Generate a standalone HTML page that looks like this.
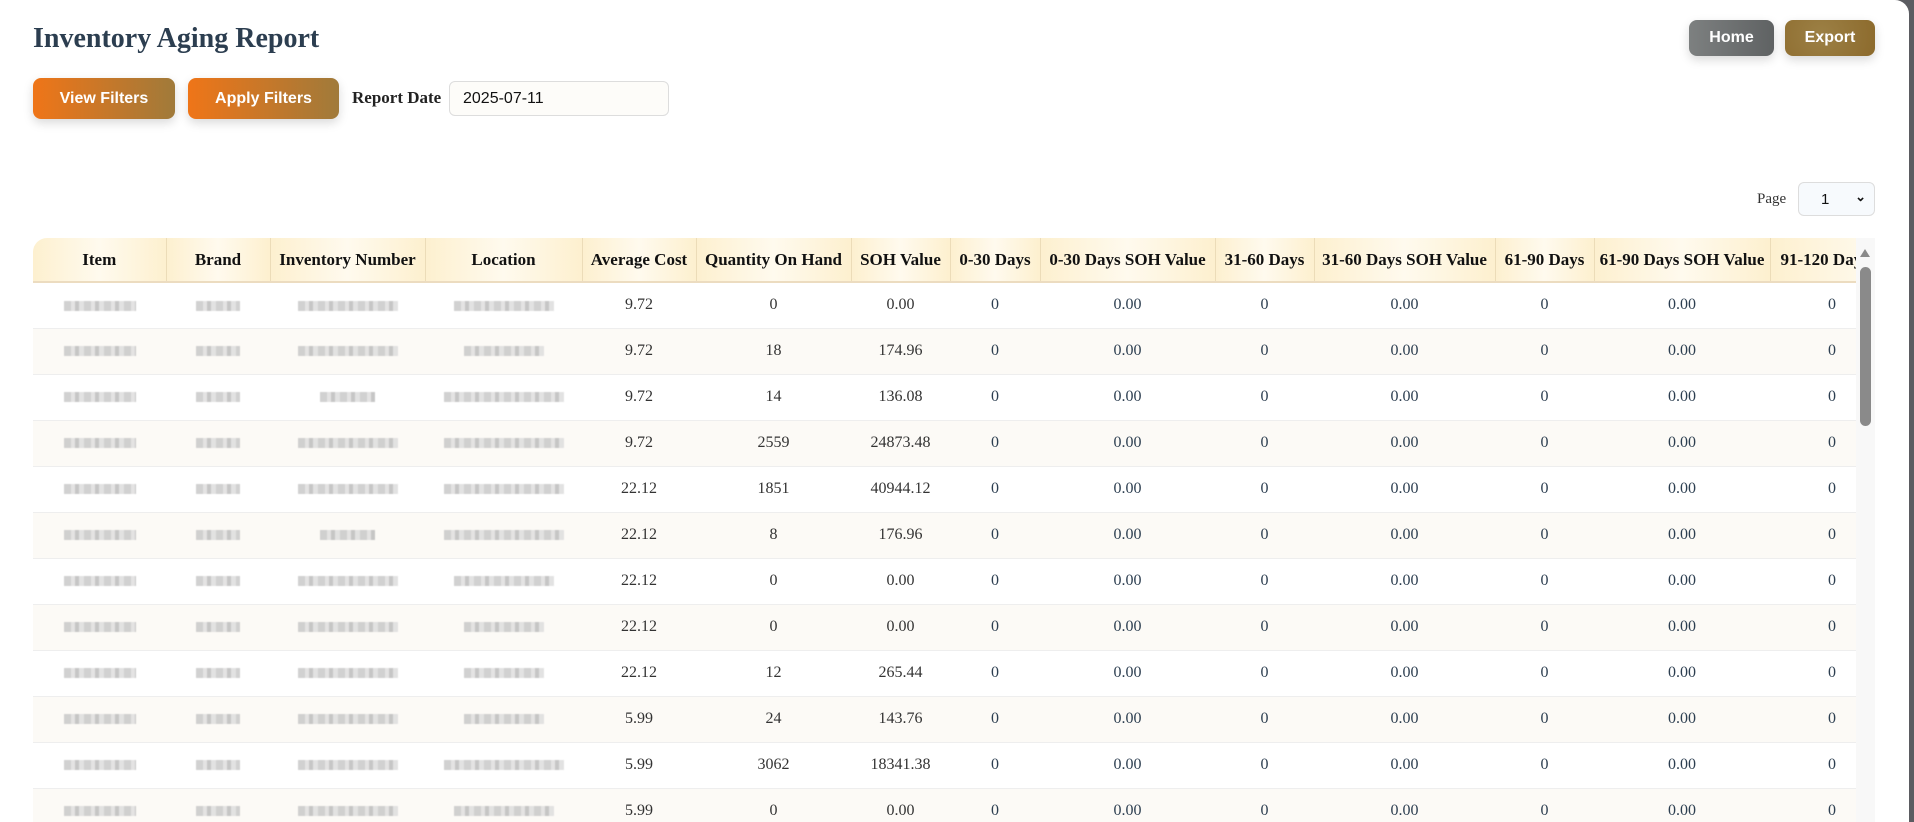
<!DOCTYPE html>
<html><head><meta charset="utf-8"><style>
*{box-sizing:border-box;margin:0;padding:0}
html,body{width:1914px;height:822px;overflow:hidden;background:#5b5c61}
.panel{position:absolute;left:0;top:0;width:1909px;height:822px;background:#fff;border-top-right-radius:14px;overflow:hidden}
h1{position:absolute;left:33px;top:23px;font:bold 28px "Liberation Serif",serif;color:#2c3e50;letter-spacing:0}
.btn{position:absolute;color:#fff;font:bold 16px "Liberation Sans",sans-serif;display:flex;align-items:center;justify-content:center;border-radius:8px;box-shadow:0 4px 10px rgba(0,0,0,.15)}
.of{background:linear-gradient(90deg,#ef7518,#a07a3a)}
.lbl{position:absolute;left:352px;top:88px;font:bold 17px "Liberation Serif",serif;color:#222}
.inp{position:absolute;left:449px;top:81px;width:220px;height:35px;border:1px solid #ddd;border-radius:6px;background:#fdfcf9;font:16px "Liberation Sans",sans-serif;color:#111;padding:8px 0 0 13px}
.pg{position:absolute;left:1757px;top:191px;font:15px "Liberation Serif",serif;color:#333}
.sel{position:absolute;left:1798px;top:182px;width:77px;height:34px;border:1px solid #ddd;border-radius:6px;background:#f7fafd;font:15px "Liberation Sans",sans-serif;padding:8px 0 0 22px;color:#111}
.tw{position:absolute;left:33px;top:238px;width:1823px;height:600px;overflow:hidden}
table{border-collapse:collapse;table-layout:fixed;width:1950px}
th{height:44px;font:bold 17px "Liberation Serif",serif;color:#111;background:linear-gradient(90deg,#fdf0cf,#fffaee 50%,#fdf0cf);border-right:1px solid #ecdcb8;border-bottom:2px solid #ecdcc0;white-space:nowrap;overflow:hidden}
th:first-child{border-top-left-radius:14px}
td{height:46px;text-align:center;font:16px "Liberation Serif",serif;color:#333;border-bottom:1px solid #eee}
tr:nth-child(even) td{background:#fcfaf6}
td.b{color:#2c3e50}
.bl{display:inline-block;height:10px;vertical-align:middle;background:repeating-linear-gradient(90deg,#c9c9c9 0 7px,#e0dfdf 7px 11px,#bdbdbd 11px 15px,#dedede 15px 20px);filter:blur(.6px);opacity:.85}
.sb{position:absolute;left:1856px;top:238px;width:19px;height:600px;background:#f8f8f8}
.th{position:absolute;left:4px;top:29px;width:11px;height:159px;background:#8a8a8a;border-radius:6px}
.ar{position:absolute;left:4px;top:11px;width:0;height:0;border-left:5.5px solid transparent;border-right:5.5px solid transparent;border-bottom:8px solid #8a8a8a}
</style></head><body>
<div class="panel">
<h1>Inventory Aging Report</h1>
<div class="btn of" style="left:33px;top:78px;width:142px;height:41px">View Filters</div>
<div class="btn of" style="left:188px;top:78px;width:151px;height:41px">Apply Filters</div>
<div class="lbl">Report Date</div>
<div class="inp">2025-07-11</div>
<div class="btn" style="left:1689px;top:20px;width:85px;height:36px;background:linear-gradient(90deg,#7d8080,#5f6263)">Home</div>
<div class="btn" style="left:1785px;top:20px;width:90px;height:36px;background:radial-gradient(circle at 40% 40%,#9c8045,#8c6a2c)">Export</div>
<div class="pg">Page</div>
<div class="sel">1<span style="position:absolute;right:8px;top:6px;font-size:13px;font-weight:bold">&#8964;</span></div>
<div class="tw"><table>
<colgroup><col style="width:133px"><col style="width:104px"><col style="width:155px"><col style="width:157px"><col style="width:114px"><col style="width:155px"><col style="width:99px"><col style="width:90px"><col style="width:175px"><col style="width:99px"><col style="width:181px"><col style="width:99px"><col style="width:176px"><col style="width:213px"></colgroup>
<tr><th>Item</th><th>Brand</th><th>Inventory Number</th><th>Location</th><th>Average Cost</th><th>Quantity On Hand</th><th>SOH Value</th><th>0-30 Days</th><th>0-30 Days SOH Value</th><th>31-60 Days</th><th>31-60 Days SOH Value</th><th>61-90 Days</th><th>61-90 Days SOH Value</th><th style="text-align:left;padding-left:10px">91-120 Days</th></tr>
</table></div>
<div class="sb"><div class="ar"></div><div class="th"></div></div>
</div>
<script>
var d=[["9.72","0","0.00",100,100],["9.72","18","174.96",100,80],["9.72","14","136.08",55,120],["9.72","2559","24873.48",100,120],["22.12","1851","40944.12",100,120],["22.12","8","176.96",55,120],["22.12","0","0.00",100,100],["22.12","0","0.00",100,80],["22.12","12","265.44",100,80],["5.99","24","143.76",100,80],["5.99","3062","18341.38",100,120],["5.99","0","0.00",100,100]];
var t=document.querySelector('table'),h='';
d.forEach(function(r){h+='<tr><td><span class="bl" style="width:72px"></span></td><td><span class="bl" style="width:44px"></span></td><td><span class="bl" style="width:'+r[3]+'px"></span></td><td><span class="bl" style="width:'+r[4]+'px"></span></td><td>'+r[0]+'</td><td>'+r[1]+'</td><td>'+r[2]+'</td><td class="b">0</td><td class="b">0.00</td><td class="b">0</td><td class="b">0.00</td><td class="b">0</td><td class="b">0.00</td><td class="b" style="text-align:left;padding-left:58px">0</td></tr>'});
t.insertAdjacentHTML('beforeend',h);
</script>
</body></html>
